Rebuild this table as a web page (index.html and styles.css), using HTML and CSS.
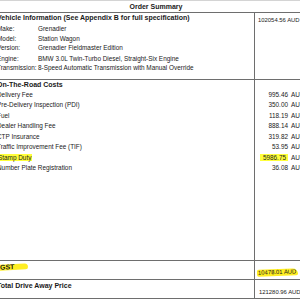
FILE: index.html
```html
<!DOCTYPE html>
<html>
<head>
<meta charset="utf-8">
<link rel="stylesheet" href="styles.css">
</head>
<body>
<div class="sheet">
  <div class="title">Order Summary</div>
  <div class="section vehicle">
    <div class="left">
      <div class="head">Vehicle Information (See Appendix B for full specification)</div>
      <div class="spec"><span class="k">Make:</span><span>Grenadier</span></div>
      <div class="spec"><span class="k">Model:</span><span>Station Wagon</span></div>
      <div class="spec"><span class="k">Version:</span><span>Grenadier Fieldmaster Edition</span></div>
      <div class="spec"><span class="k">Engine:</span><span>BMW 3.0L Twin-Turbo Diesel, Straight-Six Engine</span></div>
      <div class="spec"><span class="k">Transmission:</span><span>8-Speed Automatic Transmission with Manual Override</span></div>
    </div>
    <div class="right"><div class="amt-top">102054.56 AUD</div></div>
  </div>
  <div class="section costs">
    <div class="left">
      <div class="head">On-The-Road Costs</div>
      <div class="row">Delivery Fee</div>
      <div class="row">Pre-Delivery Inspection (PDI)</div>
      <div class="row">Fuel</div>
      <div class="row">Dealer Handling Fee</div>
      <div class="row">CTP Insurance</div>
      <div class="row">Traffic Improvement Fee (TIF)</div>
      <div class="row"><span class="hl">Stamp Duty</span></div>
      <div class="row">Number Plate Registration</div>
    </div>
    <div class="right">
      <div class="head">&nbsp;</div>
      <div class="row money"><span class="num">995.46</span><span class="unit">AUD</span></div>
      <div class="row money"><span class="num">350.00</span><span class="unit">AUD</span></div>
      <div class="row money"><span class="num">118.19</span><span class="unit">AUD</span></div>
      <div class="row money"><span class="num">888.14</span><span class="unit">AUD</span></div>
      <div class="row money"><span class="num">319.82</span><span class="unit">AUD</span></div>
      <div class="row money"><span class="num">53.95</span><span class="unit">AUD</span></div>
      <div class="row money"><span class="num"><span class="hl hl-num">5986.75</span></span><span class="unit">AUD</span></div>
      <div class="row money"><span class="num">36.08</span><span class="unit">AUD</span></div>
    </div>
  </div>
  <div class="section gst">
    <div class="left"><div class="bold-label"><span class="swash swash-l">GST</span></div></div>
    <div class="right"><div class="amt-low"><span class="swash swash-r">10478.01 AUD</span></div></div>
  </div>
  <div class="section total">
    <div class="left"><div class="bold-label">Total Drive Away Price</div></div>
    <div class="right"><div class="amt-total">121280.96 AUD</div></div>
  </div>
</div>
</body>
</html>
```

FILE: styles.css
```css
html, body {
  margin: 0;
  padding: 0;
  background: #fff;
  overflow: hidden;
}
body {
  font-family: "Liberation Sans Narrow", "Liberation Sans", Arial, sans-serif;
  font-size: 6.4px;
  color: #1a1a1a;
  width: 300px;
  height: 300px;
}
.sheet {
  margin-left: -3px;
  width: 312px;
  border-top: 1px solid #d4d4d4;
}
.title {
  height: 11px;
  line-height: 11px;
  text-align: center;
  font-weight: bold;
  font-size: 7px;
  padding-left: 6px;
  border-bottom: 1px solid #6e6e6e;
}
.section {
  display: grid;
  grid-template-columns: 258px 1fr;
  border-bottom: 1px solid #6e6e6e;
}
.left {
  border-right: 1px solid #6e6e6e;
  min-width: 0;
}
.head {
  font-weight: bold;
  font-size: 7px;
  height: 10px;
  line-height: 10px;
}
.vehicle { height: 66px; }
.spec {
  display: grid;
  grid-template-columns: 41px 1fr;
  height: 9.6px;
  line-height: 9.6px;
  white-space: nowrap;
}
.spec:nth-child(2) { margin-top: 1px; }
.spec:nth-child(5) { margin-top: 1px; }
.amt-top {
  padding-left: 3px;
  margin-top: 3px;
  line-height: 9px;
  font-size: 5.9px;
  white-space: nowrap;
}
.costs { height: 180px; }
.row {
  height: 10.43px;
  line-height: 10.43px;
  white-space: nowrap;
}
.money {
  display: grid;
  grid-template-columns: 33px auto;
  column-gap: 3px;
}
.num { text-align: right; }
.hl {
  background: #ffff3a;
  padding: 0 1px;
}
.hl-num { padding: 0 2px 0 3px; }
.gst, .total { height: 18px; }
.bold-label {
  font-weight: bold;
  font-size: 7px;
  line-height: 10px;
  margin-top: 1px;
}
.swash {
  display: inline-block;
  background: #ffee22;
}
.swash-l {
  padding: 0 14px 0 3px;
  line-height: 6px;
  border-radius: 0 5px 3px 0;
  transform: skewY(-3deg);
}
.amt-low {
  padding-left: 2px;
  margin-top: 8px;
  font-size: 5.9px;
  white-space: nowrap;
}
.swash-r {
  line-height: 7px;
  padding: 0 2px 0 1px;
  border-radius: 2px 6px 2px 2px;
  transform: rotate(-2deg);
}
.amt-total {
  padding-left: 4px;
  margin-top: 9px;
  line-height: 7px;
  font-size: 5.9px;
  white-space: nowrap;
}
```
